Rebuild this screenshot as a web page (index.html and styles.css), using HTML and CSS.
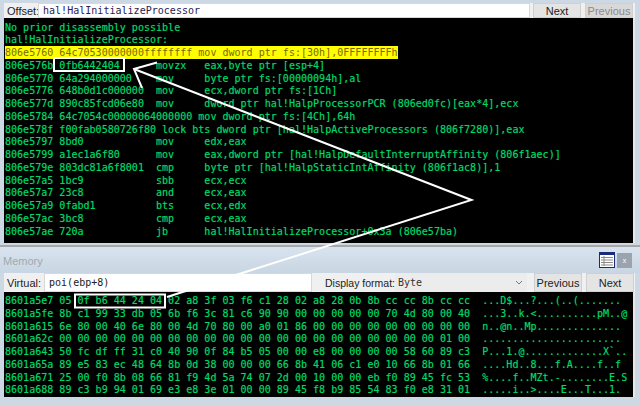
FILE: index.html
```html
<!DOCTYPE html>
<html>
<head>
<meta charset="utf-8">
<link rel="stylesheet" href="styles.css">
</head>
<body>
<div class="app">
  <div class="bar top">
    <span class="grip"></span>
    <span class="label">Offset:</span>
    <div class="input mono">hal!HalInitializeProcessor</div>
    <button class="btn next">Next</button>
    <button class="btn off">Previous</button>
  </div>
  <pre class="pane dis mono"><span>No prior disassembly possible</span>
<span>hal!HalInitializeProcessor:</span>
<span class="hl">806e5760 64c70530000000ffffffff mov dword ptr fs:[30h],0FFFFFFFFh</span>
<span>806e576b 0fb6442404      movzx   eax,byte ptr [esp+4]</span>
<span>806e5770 64a294000000    mov     byte ptr fs:[00000094h],al</span>
<span>806e5776 648b0d1c000000  mov     ecx,dword ptr fs:[1Ch]</span>
<span>806e577d 890c85fcd06e80  mov     dword ptr hal!HalpProcessorPCR (806ed0fc)[eax*4],ecx</span>
<span>806e5784 64c7054c00000064000000 mov dword ptr fs:[4Ch],64h</span>
<span>806e578f f00fab0580726f80 lock bts dword ptr [hal!HalpActiveProcessors (806f7280)],eax</span>
<span>806e5797 8bd0            mov     edx,eax</span>
<span>806e5799 a1ec1a6f80      mov     eax,dword ptr [hal!HalpDefaultInterruptAffinity (806f1aec)]</span>
<span>806e579e 803dc81a6f8001  cmp     byte ptr [hal!HalpStaticIntAffinity (806f1ac8)],1</span>
<span>806e57a5 1bc9            sbb     ecx,ecx</span>
<span>806e57a7 23c8            and     ecx,eax</span>
<span>806e57a9 0fabd1          bts     ecx,edx</span>
<span>806e57ac 3bc8            cmp     ecx,eax</span>
<span>806e57ae 720a            jb      hal!HalInitializeProcessor+0x3a (806e57ba)</span></pre>
  <div class="memhead">
    <span class="memtitle">Memory</span>
    <svg class="winicon" viewBox="0 0 16 16" width="16" height="16">
      <rect x="0" y="0" width="16" height="16" fill="#1a2a7c"/>
      <rect x="1" y="3" width="14" height="12" fill="#fff"/>
      <path d="M2 5.500H14M2 8H14M2 10.500H14M2 13H14M5 4V14" stroke="#8a8a8a" stroke-width="1" fill="none"/>
    </svg>
    <span class="close">x</span>
  </div>
  <div class="bar mem">
    <span class="grip"></span>
    <span class="label">Virtual:</span>
    <div class="input mono virt">poi(ebp+8)</div>
    <span class="label fmt">Display format:</span>
    <div class="select mono"><span>Byte</span>
      <svg viewBox="0 0 8 5" width="8" height="5"><path d="M1 1L4 4L7 1" stroke="#777" fill="none"/></svg>
    </div>
    <button class="btn prev">Previous</button>
    <button class="btn nextm">Next</button>
  </div>
  <pre class="pane hex mono">8601a5e7 05 0f b6 44 24 04 02 a8 3f 03 f6 c1 28 02 a8 28 0b 8b cc cc 8b cc cc  ...D$...?...(..(.......
8601a5fe 8b c1 99 33 db 05 6b f6 3c 81 c6 90 90 00 00 00 00 00 70 4d 80 00 40  ...3..k.&lt;..........pM..@
8601a615 6e 80 00 40 6e 80 00 4d 70 80 00 a0 01 86 00 00 00 00 00 00 00 00 00  n..@n..Mp..............
8601a62c 00 00 00 00 00 00 00 00 00 00 00 00 00 00 00 00 00 00 00 00 00 01 00  .......................
8601a643 50 fc df ff 31 c0 40 90 0f 84 b5 05 00 00 e8 00 00 00 00 58 60 89 c3  P...1.@.............X`..
8601a65a 89 e5 83 ec 48 64 8b 0d 38 00 00 00 66 8b 41 06 c1 e0 10 66 8b 01 66  ....Hd..8...f.A....f..f
8601a671 25 00 f0 8b 08 66 81 f9 4d 5a 74 07 2d 00 10 00 00 eb f0 89 45 fc 53  %....f..MZt.-........E.S
8601a688 89 c3 b9 94 01 69 e3 e8 3e 01 00 00 89 45 f8 b9 85 54 83 f0 e8 31 01  .....i..&gt;....E...T...1.</pre>
  <svg class="overlay" viewBox="0 0 640 406" width="640" height="406">
    <rect class="box" x="54" y="58" width="70" height="13"/>
    <rect class="box" x="75" y="294.500" width="90" height="13"/>
    <path class="line" d="M134 69L471.500 200L167 297"/>
    <path class="line" d="M157 62.500L134 69L142 88"/>
  </svg>
</div>
</body>
</html>
```
FILE: styles.css
```css
* { box-sizing: border-box; }
html, body { margin: 0; padding: 0; }
body { width: 640px; height: 406px; overflow: hidden; background: #ccd9e5; }
.app { position: relative; width: 640px; height: 406px; display: flex; flex-direction: column; padding: 3px 5px 0 4px; border-top: 0; }
.mono { font-family: "DejaVu Sans Mono", monospace; font-size: 10px; letter-spacing: 0.020px; }
.bar { display: flex; align-items: stretch; background: #f0f0f0; color: #222; font-family: "Liberation Sans", sans-serif; font-size: 11px; flex: none; }
.top { height: 15px; }
.grip { width: 3px; flex: none; }
.label { display: flex; align-items: center; white-space: nowrap; width: 31px; flex: none; }
.input { background: #fff; color: #2a2250; display: flex; align-items: center; padding-left: 4px; border: 1px solid #d8d8d8; flex: none; }
.top .input { width: 492px; }
.btn { font-family: "Liberation Sans", sans-serif; font-size: 11px; background: #e4e4e4; color: #222; border: 1px solid #d0d0d0; padding: 0; margin: 0; flex: none; width: 48px; }
.next { margin-left: 3px; }
.off { margin-left: 4px; color: #8a8a8a; background: #d8d8d8; }
.pane { margin: 0; background: #000; color: #00d868; line-height: 12.750px; white-space: pre; overflow: hidden; flex: none; text-shadow: 0 0 1px rgba(0, 216, 104, 0.5); }
.dis { height: 225px; padding: 3.500px 0 0 1px; border-right: 2px solid #e8e8e8; }
.dis .hl { background: #ffff00; color: #7a6a00; padding: 1px 0; text-shadow: none; }
.memhead { height: 28px; flex: none; display: flex; align-items: center; border-top: 2px solid #a8a8a8; margin: 2px -5px 0 -4px; padding: 0 8px 0 3px; color: #a0a8b0; font-family: "Liberation Sans", sans-serif; font-size: 11px; background: linear-gradient(#d8e3ee, #c8d6e3); }
.memtitle { flex: 1; padding-top: 1px; }
.winicon { margin-right: 2px; }
.close { width: 15px; height: 15px; background: #9aa3ae; color: #fff; font-size: 7px; display: flex; align-items: center; justify-content: center; }
.mem { height: 19px; }
.mem .label { width: 37px; }
.mem .grip { width: 3px; }
.mem .input { width: 268px; padding-left: 4px; color: #222; }
.mem .fmt { width: 83px; padding-left: 13px; font-size: 10.500px; }
.select { width: 132px; flex: none; background: #ececec; color: #333; display: flex; align-items: center; justify-content: space-between; padding: 0 4px 0 3px; margin-right: 7px; }
.nextm { margin-left: 4px; }
.hex { height: 105px; padding: 3px 0 0 1px; border-right: 2px solid #e8e8e8; }
.overlay { position: absolute; left: 0; top: 0; pointer-events: none; }
.box { fill: none; stroke: #fff; stroke-width: 2; }
.line { fill: none; stroke: #fff; stroke-width: 2; }
```
